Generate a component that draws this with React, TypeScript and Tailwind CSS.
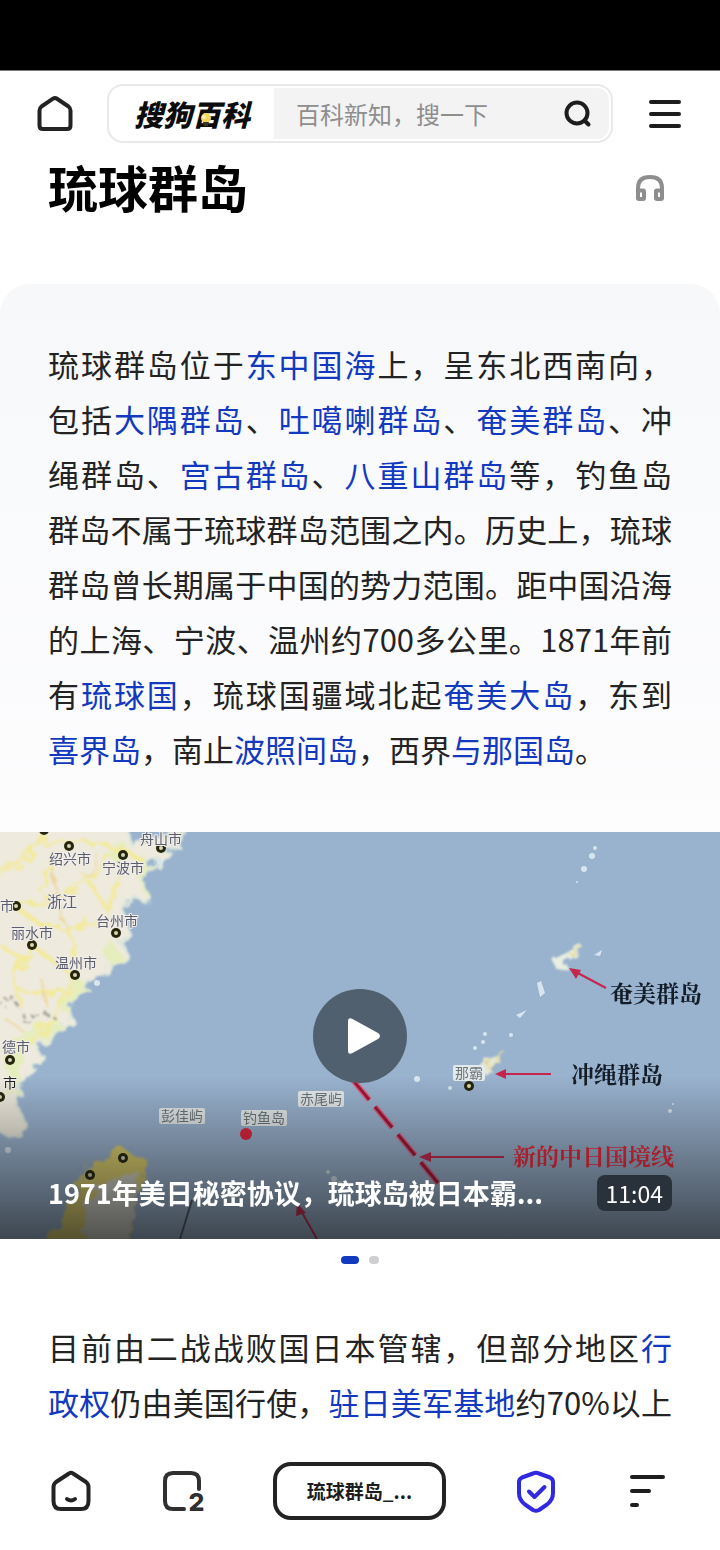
import React from 'react';

type Part = string | { link: string };

const a = (link: string): Part => ({ link });

const introLines: Part[][] = [
  ['琉球群岛位于', a('东中国海'), '上，呈东北西南向，'],
  ['包括', a('大隅群岛'), '、', a('吐噶喇群岛'), '、', a('奄美群岛'), '、冲'],
  ['绳群岛、', a('宫古群岛'), '、', a('八重山群岛'), '等，钓鱼岛'],
  ['群岛不属于琉球群岛范围之内。历史上，琉球'],
  ['群岛曾长期属于中国的势力范围。距中国沿海'],
  ['的上海、宁波、温州约700多公里。1871年前'],
  ['有', a('琉球国'), '，琉球国疆域北起', a('奄美大岛'), '，东到'],
  [a('喜界岛'), '，南止', a('波照间岛'), '，西界', a('与那国岛'), '。'],
];

const statusLines: Part[][] = [
  ['目前由二战战败国日本管辖，但部分地区', a('行')],
  [a('政权'), '仍由美国行使，', a('驻日美军基地'), '约70%以上'],
];

interface ParagraphProps {
  lines: Part[][];
  continues?: boolean;
}

function Paragraph({ lines, continues = false }: ParagraphProps) {
  return (
    <p className="px-12 text-[31px] leading-[55px] text-[#232323]">
      {lines.map((parts, i) => (
        <span
          key={i}
          className={
            continues || i < lines.length - 1
              ? 'block whitespace-nowrap text-justify [text-align-last:justify]'
              : 'block whitespace-nowrap'
          }
        >
          {parts.map((part, j) =>
            typeof part === 'string' ? (
              part
            ) : (
              <a key={j} href="#" className="text-[#1239be]">
                {part.link}
              </a>
            )
          )}
        </span>
      ))}
    </p>
  );
}

const cities = [
  { x: 69, y: 14 },
  { x: 123, y: 23 },
  { x: 161, y: 16 },
  { x: 16, y: 74 },
  { x: 32, y: 113 },
  { x: 116, y: 101 },
  { x: 75, y: 143 },
  { x: 10, y: 228 },
  { x: 0, y: 265 },
  { x: 44, y: -2 },
  { x: 123, y: 326 },
  { x: 90, y: 343 },
  { x: 469, y: 254 },
];

const cityNames = [
  { x: 49, y: 32, name: '绍兴市' },
  { x: 102, y: 41, name: '宁波市' },
  { x: 140, y: 12, name: '舟山市' },
  { x: 0, y: 79, name: '市' },
  { x: 11, y: 106, name: '丽水市' },
  { x: 96, y: 94, name: '台州市' },
  { x: 55, y: 136, name: '温州市' },
  { x: 2, y: 220, name: '德市' },
];

const tags = [
  { x: 159, y: 276, w: 46, name: '彭佳屿' },
  { x: 241, y: 278, w: 46, name: '钓鱼岛' },
  { x: 298, y: 259, w: 46, name: '赤尾屿' },
  { x: 453, y: 233, w: 32, name: '那霸' },
];

const islets = [
  [595, 16, 2], [592, 24, 3], [584, 37, 3], [577, 50, 1], [485, 202, 2], [511, 203, 2],
  [483, 210, 2], [475, 216, 2], [417, 247, 3], [450, 256, 2], [670, 279, 2], [673, 272, 1],
  [328, 340, 2], [334, 347, 3], [340, 351, 2],
];

function SeaMap() {
  return (
    <svg
      viewBox="0 0 720 407"
      preserveAspectRatio="xMidYMid slice"
      className="block w-full"
      aria-hidden="true"
    >
      <defs>
        <filter id="coast" x="-5%" y="-5%" width="110%" height="110%">
          <feTurbulence type="fractalNoise" baseFrequency="0.09" numOctaves="3" seed="4" />
          <feDisplacementMap in="SourceGraphic" scale="16" />
          <feGaussianBlur stdDeviation="0.8" />
        </filter>
        <filter id="soft">
          <feGaussianBlur stdDeviation="0.6" />
        </filter>
        <linearGradient id="shade" x1="0" y1="0" x2="0" y2="1">
          <stop offset="0" stopColor="#101010" stopOpacity="0" />
          <stop offset="1" stopColor="#101010" stopOpacity="0.66" />
        </linearGradient>
        <clipPath id="mainland">
          <path d="M0 0H122L132 14L150 8L183 0L176 12L165 25L152 33L144 40L142 50L147 60L148 73L132 64L122 78L126 95L130 102L122 112L128 125L112 133L106 142L94 143L80 160L70 175L72 187L58 200L40 215L42 226L34 230L28 244L20 254L18 274L25 294L20 304L0 298Z" />
        </clipPath>
      </defs>
      <rect width="720" height="407" fill="#99b2ce" />

      <g filter="url(#coast)">
        <path
          d="M-12 -12H126L132 14L150 8L183 -4L176 12L165 25L152 33L144 40L142 50L147 60L148 73L132 64L122 78L126 95L130 102L122 112L128 125L112 133L106 142L94 143L80 160L70 175L72 187L58 200L40 215L42 226L34 230L28 244L20 254L18 274L25 294L20 304L-12 298Z"
          fill="#eeeadd"
          stroke="#dce6dc"
          strokeWidth="3"
        />
        <g clipPath="url(#mainland)" fill="none">
          <path
            d="M140 28L150 60M122 10L112 28M106 112L118 130M84 150L64 178M60 190L18 212L10 260"
            stroke="#e6edbd"
            strokeWidth="14"
          />
          <path
            d="M-5 40L40 12L80 8L120 16L145 30M44 0L30 26L-5 46M16 76L60 64L88 46L112 26M16 76L40 92L70 97L108 88M58 20L40 60M70 97L76 130M90 50L108 80L118 40M32 114L52 128L75 145L60 178L30 212M32 114L14 146L22 176M-5 110L26 130M20 160L66 160M-5 228L30 206"
            stroke="#f3ea9c"
            strokeWidth="4"
          />
          <path d="M52 36L58 64L66 96M88 46L96 18M48 178L40 146M4 186L24 200" stroke="#edd7a0" strokeWidth="2" />
          <path
            d="M-2 176L12 165L20 178L24 190L44 180L52 184L60 190"
            stroke="#8f9086"
            strokeWidth="2"
            strokeDasharray="7 4"
          />
        </g>
        <path
          d="M44 415L60 385L77 355L90 335L108 324L123 315L132 323L150 330L146 340L138 365L133 391L130 415Z"
          fill="#ddd06c"
        />
        <path d="M84 415L86 372L96 356L120 345L140 340L137 365L132 391L128 415Z" fill="#d3d4ca" />
        <path d="M553 128L565 120L580 112L585 117L572 126L564 137L555 136Z" fill="#e9eee2" />
        <path d="M470 245L487 230L500 220L505 218L499 228L489 237L484 246Z" fill="#e5e7d8" />
        <path d="M488 236L504 219M570 122L583 116" stroke="#e4dc98" strokeWidth="3" />
      </g>

      <g fill="#d7e5ef" filter="url(#soft)">
        {islets.map(([x, y, r]) => (
          <circle key={`${x}-${y}`} cx={x} cy={y} r={r} />
        ))}
        <path d="M537 151L541 149L545 161L540 165Z" />
        <path d="M516 183L527 178L520 186Z" />
        <path d="M594 123L602 118L600 124Z" />
        <circle cx="160" cy="30" r="3" />
        <circle cx="97" cy="151" r="3" />
        <circle cx="8" cy="318" r="3" />
      </g>

      <g filter="url(#soft)">
        <path d="M192 368L180 407" stroke="#47566a" strokeWidth="2" />
        <g stroke="#c4284d" strokeWidth="2">
          <path d="M606 156L574 139" />
          <path d="M551 242H502" />
          <path d="M504 325H426" />
          <path d="M317 407L300 377" />
        </g>
        <g fill="#c4284d">
          <path d="M569 136L581 138L576 147Z" />
          <path d="M495 242L506 237V247Z" />
          <path d="M419 325L431 320V330Z" />
          <path d="M297 371L306 381L296 384Z" />
        </g>
        <path d="M352 247L438 351" stroke="#d9678a" strokeWidth="6" strokeDasharray="27 9" />
        <path d="M352 247L438 351" stroke="#a01838" strokeWidth="3" strokeDasharray="27 9" />
        <circle cx="246" cy="302" r="6" fill="#e0243c" />

        {cities.map(({ x, y }) => (
          <g key={`${x}-${y}`}>
            <circle cx={x} cy={y} r="5" fill="#25250f" />
            <circle cx={x} cy={y} r="2" fill="#d8d8b8" />
          </g>
        ))}
        <g fontSize="14" fill="#5d5d70" stroke="#f0eee8" strokeWidth="2" paintOrder="stroke">
          {cityNames.map(({ x, y, name }) => (
            <text key={name + x} x={x} y={y}>
              {name}
            </text>
          ))}
          <text x="47" y="75" fontSize="15">浙江</text>
          <text x="3" y="256" fill="#222">市</text>
        </g>
        {tags.map(({ x, y, w, name }) => (
          <g key={name}>
            <rect x={x} y={y} width={w} height="16" rx="2" fill="#e4e9ea" />
            <text x={x + 2} y={y + 13} fontSize="14" fill="#6b777c">
              {name}
            </text>
          </g>
        ))}
        <g fontSize="23" fontWeight="700" className="font-['Noto_Serif_CJK_SC','Noto_Sans_CJK_SC',serif]">
          <text x="610" y="170" fill="#121c28">奄美群岛</text>
          <text x="571" y="251" fill="#121c28">冲绳群岛</text>
          <text x="513" y="333" fill="#f0263a">新的中日国境线</text>
        </g>
      </g>
      <rect y="245" width="720" height="162" fill="url(#shade)" />
    </svg>
  );
}

function SiteHeader() {
  return (
    <header className="flex items-center pt-[13px] pr-[38px] pl-[37px]">
      <a href="#" aria-label="首页">
        <svg width="36" height="38" viewBox="0 0 36 38" fill="none" stroke="#232323" strokeWidth="4" strokeLinejoin="round">
          <path d="M16 3.7Q18 2.4 20 3.7L31.500 11.500Q33.500 13 33.500 15.500V30.500Q33.500 34 30 34H6Q2.500 34 2.500 30.500V15.500Q2.500 13 4.500 11.500Z" />
        </svg>
      </a>
      <form
        className="mr-[35px] ml-[34px] flex h-[59px] min-w-0 flex-1 items-stretch rounded-2xl border-2 border-[#e9e9e9] bg-white p-[2px]"
        onSubmit={(e) => e.preventDefault()}
      >
        <a href="#" className="relative flex shrink-0 items-center pr-6 pl-[23px] text-[29px] leading-none font-black text-[#0c0c0c] italic">
          搜狗百科
          <svg width="12" height="14" viewBox="0 0 12 14" className="absolute top-[25px] left-[89px]" aria-hidden="true">
            <circle cx="6" cy="5" r="5" fill="#f3d65c" />
            <path d="M3 9H9L8 13H4Z" fill="#3a3420" />
            <circle cx="4" cy="4" r="2" fill="#fbf0b4" />
          </svg>
        </a>
        <div className="flex min-w-0 flex-1 items-center rounded-r-xl bg-[#f3f3f3]">
          <input
            type="text"
            aria-label="搜索百科"
            placeholder="百科新知，搜一下"
            className="w-full min-w-0 flex-1 bg-transparent pl-[22px] text-[24px] text-[#232323] outline-none placeholder:text-[#8e8e8e]"
          />
          <button type="submit" aria-label="搜索" className="mr-[17px]">
            <svg width="28" height="28" viewBox="0 0 28 28" fill="none" stroke="#1d1d1d" strokeWidth="4" strokeLinecap="round">
              <circle cx="13" cy="13" r="10.500" />
              <path d="M20.500 20.500L24.500 24.500" />
            </svg>
          </button>
        </div>
      </form>
      <button aria-label="菜单">
        <svg width="34" height="30" viewBox="0 0 34 30" stroke="#1d1d1d" strokeWidth="4" strokeLinecap="round">
          <path d="M3 3H31M3 15H31M3 27H31" />
        </svg>
      </button>
    </header>
  );
}

function VideoCard() {
  return (
    <section className="relative">
      <SeaMap />
      <button
        aria-label="播放"
        className="absolute inset-0 m-auto flex size-[94px] items-center justify-center rounded-full bg-[#51606e]"
      >
        <svg width="34" height="38" viewBox="0 0 34 38" fill="#fff" className="ml-2">
          <path d="M1 4.500Q1 -0.500 5.500 2L31 16Q35 19 31 22L5.500 36Q1 38.500 1 33.500Z" />
        </svg>
      </button>
      <div className="absolute inset-x-0 bottom-0 flex items-center justify-between px-12 pb-7 text-white">
        <h2 className="text-[27px] leading-9 font-bold whitespace-nowrap">
          1971年美日秘密协议，琉球岛被日本霸...
        </h2>
        <span className="rounded-lg bg-[#29313a] px-[9px] text-[23px] leading-9">11:04</span>
      </div>
    </section>
  );
}

function BrowserBar() {
  return (
    <nav className="mt-1 flex h-[116px] items-center justify-between bg-white pr-[54px] pl-[50px]">
      <button aria-label="主页">
        <svg width="42" height="42" viewBox="0 0 42 42" fill="none" stroke="#232323" strokeWidth="4" strokeLinecap="round" strokeLinejoin="round">
          <path d="M19 3.500Q21 2 23 3.500L36 12Q38.500 14 38.500 17V31Q38.500 39 31 39H11Q3.500 39 3.500 31V17Q3.500 14 6 12Z" />
          <path d="M17 29Q21 32 25 29" />
        </svg>
      </button>
      <button aria-label="标签页" className="relative ml-[18px]">
        <svg width="44" height="42" viewBox="0 0 44 42" fill="none" stroke="#303030" strokeWidth="4" strokeLinecap="round">
          <path d="M23 39H12Q4 39 4 31V11Q4 3 12 3H30Q38 3 38 11V19" />
        </svg>
        <span className="absolute right-0 bottom-0 font-['Inter','Noto_Sans',sans-serif] text-[25px] leading-5 font-extrabold text-[#303030]">
          2
        </span>
      </button>
      <button className="ml-[18px] h-[58px] w-[173px] rounded-[18px] border-4 border-[#232323] text-[19px] font-bold text-[#1d1d1d]">
        琉球群岛_...
      </button>
      <button aria-label="安全" className="ml-[18px]">
        <svg width="42" height="44" viewBox="0 0 42 44" fill="none" stroke="#3029dd" strokeWidth="4" strokeLinecap="round" strokeLinejoin="round">
          <path d="M18 4.500Q21 3 24 4.500L35 8.500Q38 10 38 13V24Q38 31 32 35.500L24 41Q21 42.500 18 41L10 35.500Q4 31 4 24V13Q4 10 7 8.500Z" />
          <path d="M14 22.500L19.500 28L29.500 18" />
        </svg>
      </button>
      <button aria-label="更多" className="ml-[22px]">
        <svg width="37" height="34" viewBox="0 0 37 34" stroke="#1d1d1d" strokeWidth="4" strokeLinecap="round">
          <path d="M3 3H34M3 17H20M3 31H8" />
        </svg>
      </button>
    </nav>
  );
}

export default function App() {
  return (
    <div className="w-full overflow-hidden bg-white font-['Noto_Sans_CJK_SC',sans-serif]">
      <div className="h-[71px] border-b border-[#777] bg-black" />
      <SiteHeader />
      <main>
        <div className="mt-[11px] flex items-center justify-between pr-[55px] pl-12">
          <h1 className="text-[50px] leading-[64px] font-bold text-black">琉球群岛</h1>
          <button aria-label="朗读" className="mt-1">
            <svg width="30" height="28" viewBox="0 0 30 28" fill="none" stroke="#8e8e8e" strokeWidth="4">
              <path d="M3 25V14Q3 3 15 3Q27 3 27 14V25" />
              <rect x="3" y="16.500" width="6" height="8.500" rx="1" />
              <rect x="21" y="16.500" width="6" height="8.500" rx="1" />
            </svg>
          </button>
        </div>
        <section className="mt-[66px] rounded-t-[30px] bg-gradient-to-b from-[#f7f8fa] to-[#fdfdfe] pt-[52px] pb-14">
          <Paragraph lines={introLines} />
        </section>
        <VideoCard />
        <div className="flex h-[42px] items-center justify-center gap-[10px]">
          <span className="h-2 w-[18px] rounded-full bg-[#1239be]" />
          <span className="h-2 w-[10px] rounded-full bg-[#cfcfd2]" />
        </div>
        <div className="pt-[38px]">
          <Paragraph lines={statusLines} continues />
        </div>
      </main>
      <BrowserBar />
    </div>
  );
}
